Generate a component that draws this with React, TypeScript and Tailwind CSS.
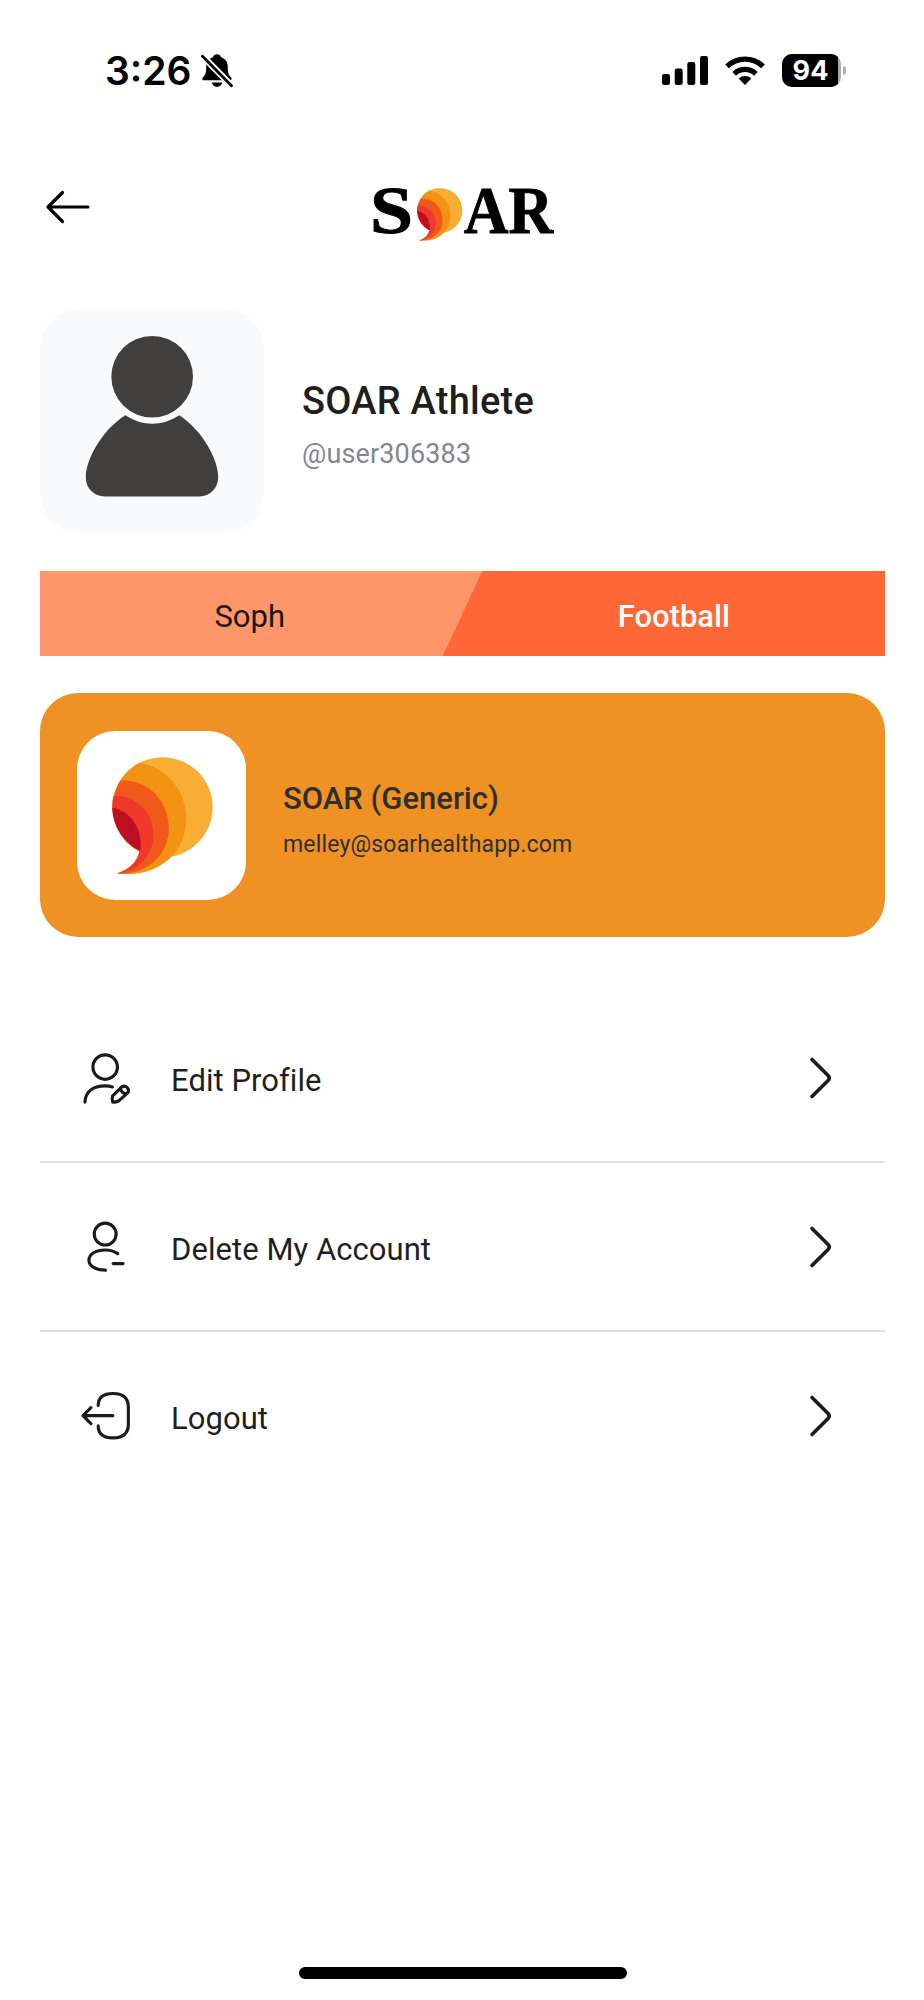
import type { ReactNode } from "react";

function SoarMark({ className }: { className?: string }) {
  return (
    <svg viewBox="157 139 302 352" className={className}>
      <circle cx="308" cy="289" r="150" fill="#f8ae35" />
      <path
        d="M238 156C322 170 379 240 379 323C379 430 290 501 172 487C205 478 232 455 240 420A150 150 0 0 1 238 156Z"
        fill="#f39314"
      />
      <path
        d="M182 209C262 203 327 268 327 350C327 432 262 492 172 487C205 478 232 455 240 420A150 150 0 0 1 182 209Z"
        fill="#f1591b"
      />
      <path
        d="M161 255C225 248 281 305 281 370C281 430 240 480 172 487C205 478 232 455 240 420A150 150 0 0 1 161 255Z"
        fill="#ef3a2b"
      />
      <path
        d="M158 290C205 295 252 350 241 420A150 150 0 0 1 158 290Z"
        fill="#be0e22"
      />
    </svg>
  );
}

function StatusBar() {
  return (
    <div className="flex h-[141px] items-center pl-[105px] pr-[78px] text-black">
      <span className="font-['Inter'] text-[39px] font-semibold leading-none">
        3:26
      </span>
      <svg viewBox="0 0 32 36" className="ml-[9px] mr-px h-[36px] w-[32px]">
        <path d="M16 1.200c2 0 3.600 1.300 4 3c4.500 1.300 6.800 5 6.800 9.500c0 6 .800 8.300 3 10.300c1.500 1.500 1 3.300-1 3.300H3.200c-2 0-2.600-1.800-1-3.300c2.200-2 3-4.300 3-10.300c0-4.500 2.300-8.200 6.800-9.500c.400-1.700 2-3 4-3z" />
        <path d="M10.800 29.600h10.400c-.600 2.700-2.600 4.300-5.200 4.300s-4.600-1.600-5.200-4.300z" />
        <path d="M0 1.500L31 33" stroke="#fff" strokeWidth="6.500" />
        <path
          d="M1.500 3.300L30.500 32.800"
          stroke="#000"
          strokeWidth="2.800"
          strokeLinecap="round"
        />
      </svg>
      <svg viewBox="0 0 46 29" className="ml-auto h-[29px] w-[46px]">
        <rect x="0" y="18" width="8" height="11" rx="2.200" />
        <rect x="12.700" y="12.500" width="8" height="16.500" rx="2.200" />
        <rect x="25.300" y="6" width="8" height="23" rx="2.200" />
        <rect x="38" y="0" width="8" height="29" rx="2.200" />
      </svg>
      <svg viewBox="0 0 40 29" className="ml-[17px] h-[29px] w-[40px]">
        <path d="M20 29l-6.300-6.500a9.200 9.200 0 0 1 12.600 0z" />
        <g fill="none" stroke="#000" strokeWidth="5.200">
          <path d="M9.200 17.800a15.600 15.600 0 0 1 21.600 0" />
          <path d="M2 10.300a26 26 0 0 1 36 0" />
        </g>
      </svg>
      <div className="ml-[17px] flex h-[33px] w-[59px] overflow-hidden rounded-[10px] bg-[#a9a9a9]">
        <div className="flex w-[56px] items-center justify-center bg-black pl-px font-['Inter'] text-[27px] font-bold leading-none text-white">
          94
        </div>
      </div>
      <div className="ml-[2px] h-[9px] w-[3px] rounded-r-full bg-[#b0b0b0]" />
    </div>
  );
}

function Header() {
  return (
    <header className="flex h-[168px] items-start">
      <svg
        viewBox="0 0 46 34"
        className="ml-[5px] mt-[49px] h-[34px] w-[46px]"
        fill="none"
        stroke="#000"
        strokeWidth="3.200"
        strokeLinecap="round"
        strokeLinejoin="round"
      >
        <path d="M43 17H3M17.500 2.500L3 17l14.500 14.500" />
      </svg>
      <div className="ml-[281px] mt-[41px] flex h-[64px] items-start">
        <svg viewBox="0 0 45 60" className="h-[60px] w-[45px] overflow-visible">
          <text
            x="-2"
            y="51"
            textLength="43"
            lengthAdjust="spacingAndGlyphs"
            stroke="#000"
            strokeWidth="1"
            className="font-['Liberation_Serif'] text-[68px] font-bold"
          >
            S
          </text>
        </svg>
        <SoarMark className="mt-[6px] h-[53px] w-[45.500px]" />
        <svg viewBox="0 0 92 60" className="h-[60px] w-[92px] overflow-visible">
          <text
            x="1"
            y="51"
            textLength="89"
            lengthAdjust="spacingAndGlyphs"
            stroke="#000"
            strokeWidth="1"
            className="font-['Liberation_Serif'] text-[67px] font-bold"
          >
            AR
          </text>
        </svg>
      </div>
    </header>
  );
}

function Profile() {
  return (
    <section className="flex h-[224px]">
      <div className="h-[224px] w-[224px] rounded-[40px] bg-[#f9fafc]">
        <svg viewBox="29 25 675 675" fill="#403f3d">
          <circle cx="367" cy="229" r="123" />
          <path d="M286 345Q367 397 449 345C522 394 566 480 566 532C566 565 540 590 510 590H224C192 590 167 565 167 532C167 480 213 392 286 345Z" />
        </svg>
      </div>
      <div className="ml-[38px] pt-[66px]">
        <h1 className="text-[38px] font-medium leading-[52px] tracking-[0.250px]">
          SOAR Athlete
        </h1>
        <p className="text-[27px] leading-[54px] tracking-[0.150px] text-[#868592]">
          @user306383
        </p>
      </div>
    </section>
  );
}

function Tags() {
  return (
    <section className="mt-[38px] grid h-[85px] grid-cols-2 bg-[linear-gradient(115deg,#ff966a_50%,#ff6737_50%)] pt-[7px] text-center text-[31px] leading-[78px]">
      <span className="pr-[3px] text-[#1b1310]">Soph</span>
      <span className="font-medium text-white">Football</span>
    </section>
  );
}

function TeamCard() {
  return (
    <section className="mt-[37px] flex h-[244px] rounded-[38px] bg-[#ef9123] px-[37px] pb-[37px] pt-[38px]">
      <div className="flex h-[169px] w-[169px] justify-center rounded-[38px] bg-white pl-px pt-[26px]">
        <SoarMark className="h-[118px] w-[101px]" />
      </div>
      <div className="ml-[37px] pt-[45px] text-[#302f2f]">
        <h2 className="text-[31px] font-medium leading-[46px]">
          SOAR (Generic)
        </h2>
        <p className="text-[23px] leading-[46px] tracking-[0.170px]">
          melley@soarhealthapp.com
        </p>
      </div>
    </section>
  );
}

type MenuRowProps = { label: string; viewBox: string; children: ReactNode };

function MenuRow({ label, viewBox, children }: MenuRowProps) {
  return (
    <li className="flex h-[169px] items-center border-b-2 border-[#dedee4] pl-[40px] pr-[52px] last:border-transparent">
      <svg
        viewBox={viewBox}
        className="h-[55px] w-[53px]"
        fill="none"
        stroke="#1b1b1c"
        strokeWidth="9.500"
        strokeLinecap="round"
        strokeLinejoin="round"
      >
        {children}
      </svg>
      <span className="ml-[38px] pt-[6px] text-[31px] leading-10 tracking-[0.050px]">
        {label}
      </span>
      <svg
        viewBox="0 0 24 44"
        className="ml-auto h-[44px] w-[24px]"
        fill="none"
        stroke="#1b1b1c"
        strokeWidth="3.600"
        strokeLinecap="round"
        strokeLinejoin="round"
      >
        <path d="M3 3.500L19.300 19.800Q21.300 22 19.300 24.200L3 40.500" />
      </svg>
    </li>
  );
}

function Menu() {
  return (
    <ul className="mt-[57px]">
      <MenuRow label="Edit Profile" viewBox="60 59 160 165">
        <circle cx="136" cy="110" r="37" />
        <path d="M75 216C77 180 104 167 136 167Q148 167 158 170" />
        <path d="M158 198L186 170A13 13 0 0 1 204 188L177 212Q171 216 159 216Q156 206 158 198ZM182 175Q185 188 199 191" />
      </MenuRow>
      <MenuRow label="Delete My Account" viewBox="60 566 160 165">
        <circle cx="136" cy="611" r="33" />
        <path d="M174 670Q158 659 136 659C108 659 87 671 87 690C87 708 108 720 137 720M160 700H190" />
      </MenuRow>
      <MenuRow label="Logout" viewBox="60 54 160 165">
        <path d="M115 106C115 80 132 70 160 70C190 70 206 84 206 112V162C206 190 190 204 160 204C132 204 115 194 115 168" />
        <path d="M159 137H69M93 113L69 137L93 161" />
      </MenuRow>
    </ul>
  );
}

export default function App() {
  return (
    <main className="flex h-[2000px] w-[924px] flex-col bg-white font-['Roboto',sans-serif] text-[#1f1f20]">
      <StatusBar />
      <div className="flex flex-1 flex-col pl-[40px] pr-[39px]">
        <Header />
        <Profile />
        <Tags />
        <TeamCard />
        <Menu />
      </div>
      <div className="mb-[21px] ml-[299px] h-[12px] w-[328px] rounded-full bg-black" />
    </main>
  );
}
